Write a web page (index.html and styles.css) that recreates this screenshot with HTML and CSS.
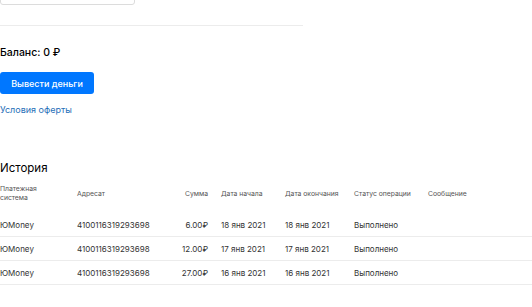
FILE: index.html
```html
<!DOCTYPE html>
<html lang="ru">
<head>
  <meta charset="UTF-8" />
  <meta name="viewport" content="width=device-width, initial-scale=1.0" />
  <title>Баланс</title>
  <link rel="stylesheet" href="styles.css">
</head>
<body>
  <div class="page">
    <div class="top">
      <input type="text" class="field">
    </div>
    <div class="balance">
      <h2 class="balance-title">Баланс: 0 ₽</h2>
      <button class="withdraw">Вывести деньги</button>
      <a class="offer" href="#">Условия оферты</a>
    </div>
    <div class="history">
      <h2 class="history-title">История</h2>
      <table class="history-table">
        <thead>
          <tr>
            <th class="c-sys">Платежная<br>система</th>
            <th class="c-addr">Адресат</th>
            <th class="c-sum">Сумма</th>
            <th class="c-start">Дата начала</th>
            <th class="c-end">Дата окончания</th>
            <th class="c-status">Статус операции</th>
            <th class="c-msg">Сообщение</th>
          </tr>
        </thead>
        <tbody>
          <tr>
            <td>ЮMoney</td>
            <td>4100116319293698</td>
            <td class="c-sum">6.00₽</td>
            <td>18 янв 2021</td>
            <td>18 янв 2021</td>
            <td>Выполнено</td>
            <td></td>
          </tr>
          <tr>
            <td>ЮMoney</td>
            <td>4100116319293698</td>
            <td class="c-sum">12.00₽</td>
            <td>17 янв 2021</td>
            <td>17 янв 2021</td>
            <td>Выполнено</td>
            <td></td>
          </tr>
          <tr>
            <td>ЮMoney</td>
            <td>4100116319293698</td>
            <td class="c-sum">27.00₽</td>
            <td>16 янв 2021</td>
            <td>16 янв 2021</td>
            <td>Выполнено</td>
            <td></td>
          </tr>
        </tbody>
      </table>
    </div>
  </div>
</body>
</html>
```

FILE: styles.css
```css
body {
  margin: 0;
  font-family: Inter, 'Noto Sans', sans-serif;
  color: #000;
  background: #fff;
}
.page {
  width: 532px;
}
.top {
  width: 303px;
  margin-top: -19px;
  padding-bottom: 20px;
  border-bottom: 1px solid #ececec;
}
.field {
  display: block;
  box-sizing: border-box;
  width: 135px;
  height: 24px;
  margin: 0;
  border: 1px solid #dcdcdc;
  border-radius: 3px;
}
.balance {
  padding-top: 20px;
}
.balance-title {
  margin: 0;
  font-size: 10.5px;
  font-weight: 500;
  line-height: 14px;
}
.withdraw {
  display: block;
  margin-top: 12px;
  width: 94px;
  height: 22px;
  padding: 0;
  border: none;
  border-radius: 3px;
  background: #0077ff;
  color: #fff;
  font-family: inherit;
  font-size: 9px;
  font-weight: 500;
}
.offer {
  display: block;
  margin-top: 10px;
  font-size: 9px;
  line-height: 12px;
  color: #1f6fb8;
  text-decoration: none;
}
.history {
  padding-top: 45px;
}
.history-title {
  margin: 0;
  font-size: 11.5px;
  font-weight: 400;
  line-height: 14px;
}
.history-table {
  width: 100%;
  margin-top: 4px;
  border-collapse: collapse;
  font-size: 8px;
}
.history-table th {
  text-align: left;
  font-size: 6.8px;
  font-weight: 400;
  color: #555;
  line-height: 9px;
  padding: 5px 0 11px;
  vertical-align: middle;
}
.history-table td {
  height: 23px;
  padding: 0;
  border-bottom: 1px solid #ececec;
  color: #333;
}
.history-table .c-sum {
  text-align: right;
  padding-right: 13px;
}
.c-sys { width: 77px; }
.c-addr { width: 90px; }
.c-sum { width: 41px; }
.c-start { width: 64px; }
.c-end { width: 69px; }
.c-status { width: 74px; }
```
